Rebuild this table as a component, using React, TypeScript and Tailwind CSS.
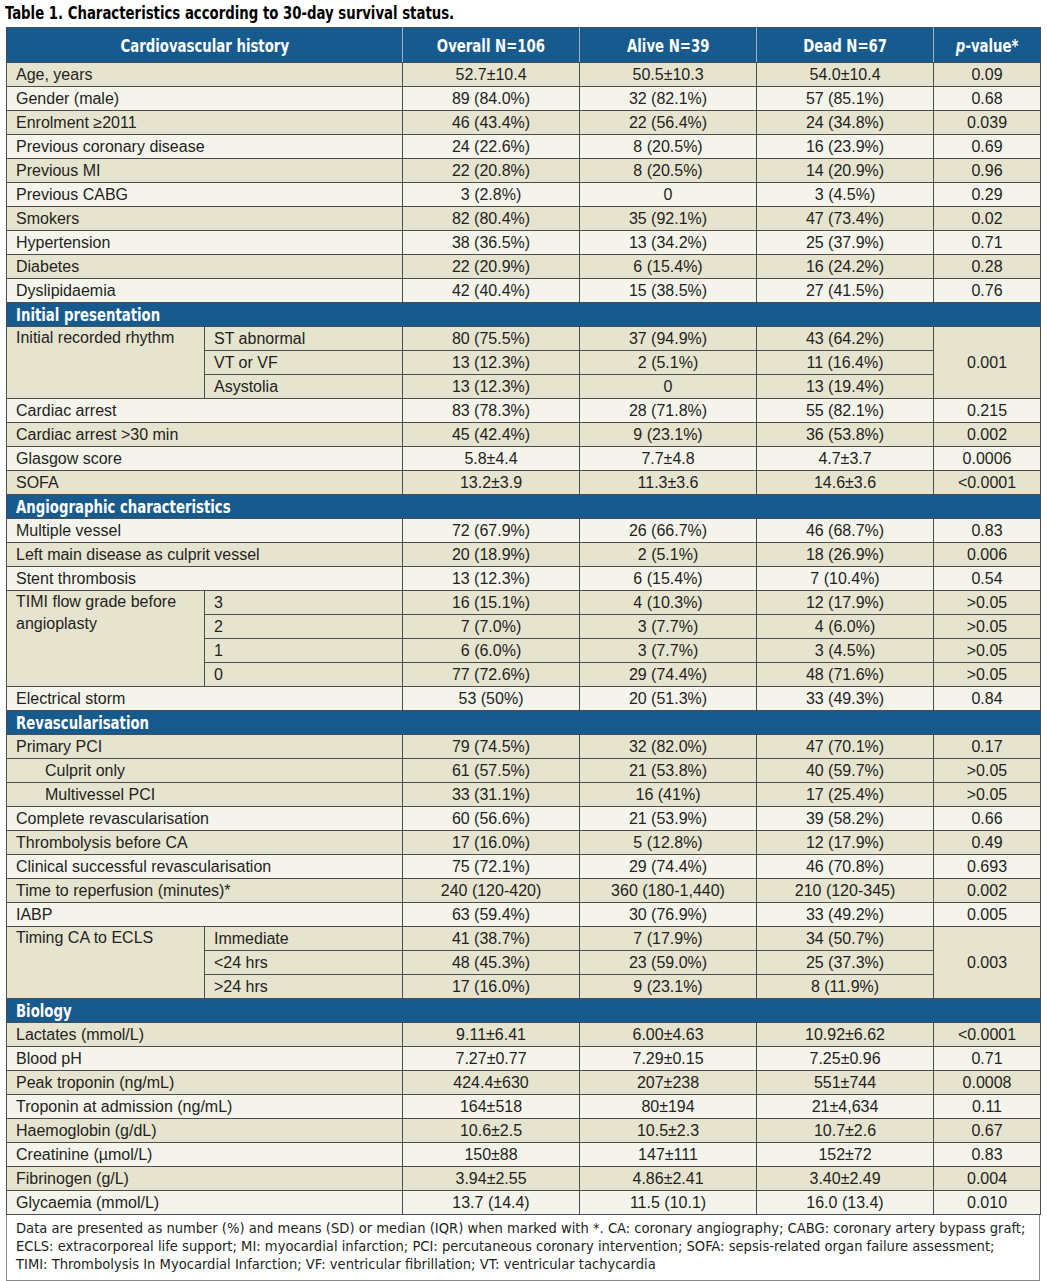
import React from 'react';

type Vals = [string, string, string, string];

type Row =
  | { kind: 'section'; title: string }
  | { kind: 'plain'; label: string; vals: Vals; dark: boolean; indent?: boolean }
  | {
      kind: 'group';
      label: string;
      dark: boolean;
      subs: { label: string; vals: [string, string, string]; p?: string }[];
      p?: string;
    };

const rows: Row[] = [
  { kind: 'plain', label: 'Age, years', vals: ['52.7±10.4', '50.5±10.3', '54.0±10.4', '0.09'], dark: true },
  { kind: 'plain', label: 'Gender (male)', vals: ['89 (84.0%)', '32 (82.1%)', '57 (85.1%)', '0.68'], dark: false },
  { kind: 'plain', label: 'Enrolment ≥2011', vals: ['46 (43.4%)', '22 (56.4%)', '24 (34.8%)', '0.039'], dark: true },
  { kind: 'plain', label: 'Previous coronary disease', vals: ['24 (22.6%)', '8 (20.5%)', '16 (23.9%)', '0.69'], dark: false },
  { kind: 'plain', label: 'Previous MI', vals: ['22 (20.8%)', '8 (20.5%)', '14 (20.9%)', '0.96'], dark: true },
  { kind: 'plain', label: 'Previous CABG', vals: ['3 (2.8%)', '0', '3 (4.5%)', '0.29'], dark: false },
  { kind: 'plain', label: 'Smokers', vals: ['82 (80.4%)', '35 (92.1%)', '47 (73.4%)', '0.02'], dark: true },
  { kind: 'plain', label: 'Hypertension', vals: ['38 (36.5%)', '13 (34.2%)', '25 (37.9%)', '0.71'], dark: false },
  { kind: 'plain', label: 'Diabetes', vals: ['22 (20.9%)', '6 (15.4%)', '16 (24.2%)', '0.28'], dark: true },
  { kind: 'plain', label: 'Dyslipidaemia', vals: ['42 (40.4%)', '15 (38.5%)', '27 (41.5%)', '0.76'], dark: false },

  { kind: 'section', title: 'Initial presentation' },
  {
    kind: 'group',
    label: 'Initial recorded rhythm',
    dark: true,
    p: '0.001',
    subs: [
      { label: 'ST abnormal', vals: ['80 (75.5%)', '37 (94.9%)', '43 (64.2%)'] },
      { label: 'VT or VF', vals: ['13 (12.3%)', '2 (5.1%)', '11 (16.4%)'] },
      { label: 'Asystolia', vals: ['13 (12.3%)', '0', '13 (19.4%)'] },
    ],
  },
  { kind: 'plain', label: 'Cardiac arrest', vals: ['83 (78.3%)', '28 (71.8%)', '55 (82.1%)', '0.215'], dark: false },
  { kind: 'plain', label: 'Cardiac arrest >30 min', vals: ['45 (42.4%)', '9 (23.1%)', '36 (53.8%)', '0.002'], dark: true },
  { kind: 'plain', label: 'Glasgow score', vals: ['5.8±4.4', '7.7±4.8', '4.7±3.7', '0.0006'], dark: false },
  { kind: 'plain', label: 'SOFA', vals: ['13.2±3.9', '11.3±3.6', '14.6±3.6', '<0.0001'], dark: true },

  { kind: 'section', title: 'Angiographic characteristics' },
  { kind: 'plain', label: 'Multiple vessel', vals: ['72 (67.9%)', '26 (66.7%)', '46 (68.7%)', '0.83'], dark: false },
  { kind: 'plain', label: 'Left main disease as culprit vessel', vals: ['20 (18.9%)', '2 (5.1%)', '18 (26.9%)', '0.006'], dark: true },
  { kind: 'plain', label: 'Stent thrombosis', vals: ['13 (12.3%)', '6 (15.4%)', '7 (10.4%)', '0.54'], dark: false },
  {
    kind: 'group',
    label: 'TIMI flow grade before angioplasty',
    dark: true,
    subs: [
      { label: '3', vals: ['16 (15.1%)', '4 (10.3%)', '12 (17.9%)'], p: '>0.05' },
      { label: '2', vals: ['7 (7.0%)', '3 (7.7%)', '4 (6.0%)'], p: '>0.05' },
      { label: '1', vals: ['6 (6.0%)', '3 (7.7%)', '3 (4.5%)'], p: '>0.05' },
      { label: '0', vals: ['77 (72.6%)', '29 (74.4%)', '48 (71.6%)'], p: '>0.05' },
    ],
  },
  { kind: 'plain', label: 'Electrical storm', vals: ['53 (50%)', '20 (51.3%)', '33 (49.3%)', '0.84'], dark: false },

  { kind: 'section', title: 'Revascularisation' },
  { kind: 'plain', label: 'Primary PCI', vals: ['79 (74.5%)', '32 (82.0%)', '47 (70.1%)', '0.17'], dark: true },
  { kind: 'plain', label: 'Culprit only', vals: ['61 (57.5%)', '21 (53.8%)', '40 (59.7%)', '>0.05'], dark: true, indent: true },
  { kind: 'plain', label: 'Multivessel PCI', vals: ['33 (31.1%)', '16 (41%)', '17 (25.4%)', '>0.05'], dark: true, indent: true },
  { kind: 'plain', label: 'Complete revascularisation', vals: ['60 (56.6%)', '21 (53.9%)', '39 (58.2%)', '0.66'], dark: false },
  { kind: 'plain', label: 'Thrombolysis before CA', vals: ['17 (16.0%)', '5 (12.8%)', '12 (17.9%)', '0.49'], dark: true },
  { kind: 'plain', label: 'Clinical successful revascularisation', vals: ['75 (72.1%)', '29 (74.4%)', '46 (70.8%)', '0.693'], dark: false },
  { kind: 'plain', label: 'Time to reperfusion (minutes)*', vals: ['240 (120-420)', '360 (180-1,440)', '210 (120-345)', '0.002'], dark: true },
  { kind: 'plain', label: 'IABP', vals: ['63 (59.4%)', '30 (76.9%)', '33 (49.2%)', '0.005'], dark: false },
  {
    kind: 'group',
    label: 'Timing CA to ECLS',
    dark: true,
    p: '0.003',
    subs: [
      { label: 'Immediate', vals: ['41 (38.7%)', '7 (17.9%)', '34 (50.7%)'] },
      { label: '<24 hrs', vals: ['48 (45.3%)', '23 (59.0%)', '25 (37.3%)'] },
      { label: '>24 hrs', vals: ['17 (16.0%)', '9 (23.1%)', '8 (11.9%)'] },
    ],
  },

  { kind: 'section', title: 'Biology' },
  { kind: 'plain', label: 'Lactates (mmol/L)', vals: ['9.11±6.41', '6.00±4.63', '10.92±6.62', '<0.0001'], dark: true },
  { kind: 'plain', label: 'Blood pH', vals: ['7.27±0.77', '7.29±0.15', '7.25±0.96', '0.71'], dark: false },
  { kind: 'plain', label: 'Peak troponin (ng/mL)', vals: ['424.4±630', '207±238', '551±744', '0.0008'], dark: true },
  { kind: 'plain', label: 'Troponin at admission (ng/mL)', vals: ['164±518', '80±194', '21±4,634', '0.11'], dark: false },
  { kind: 'plain', label: 'Haemoglobin (g/dL)', vals: ['10.6±2.5', '10.5±2.3', '10.7±2.6', '0.67'], dark: true },
  { kind: 'plain', label: 'Creatinine (µmol/L)', vals: ['150±88', '147±111', '152±72', '0.83'], dark: false },
  { kind: 'plain', label: 'Fibrinogen (g/L)', vals: ['3.94±2.55', '4.86±2.41', '3.40±2.49', '0.004'], dark: true },
  { kind: 'plain', label: 'Glycaemia (mmol/L)', vals: ['13.7 (14.4)', '11.5 (10.1)', '16.0 (13.4)', '0.010'], dark: false },
];

// condensed bold headings: DejaVu Condensed squeezed a little further
const narrow = "font-['Liberation_Sans_Narrow','DejaVu_Sans_Condensed','Liberation_Sans',sans-serif]";
const cell = 'h-[24px] border border-[#4d4d4d] p-0 text-center align-middle leading-[22px]';
const labelCell = 'h-[24px] border border-[#4d4d4d] py-0 pl-[9px] pr-1 text-left align-middle leading-[22px]';
const headCell = 'h-[35px] border border-[#4d4d4d] border-r-[#9fb3c6] p-0 text-center align-middle';

const bgOf = (dark: boolean) => (dark ? 'bg-[#e6e3cf]' : 'bg-[#f4f4ec]');

const Squeeze = ({ children, left }: { children: React.ReactNode; left?: boolean }) => (
  <span className={`inline-block whitespace-nowrap scale-x-[0.82] ${left ? 'origin-left' : 'origin-center'}`}>{children}</span>
);

const renderRow = (row: Row, i: number) => {
  if (row.kind === 'section') {
    return (
      <tr key={i} className="bg-[#175a8e]">
        <td
          colSpan={6}
          className={`h-[24px] border border-[#4d4d4d] py-0 pl-[9px] text-left align-middle text-[18px] font-bold leading-[22px] text-white ${narrow}`}
        >
          <Squeeze left>{row.title}</Squeeze>
        </td>
      </tr>
    );
  }
  if (row.kind === 'plain') {
    return (
      <tr key={i} className={bgOf(row.dark)}>
        <td colSpan={2} className={`${labelCell} ${row.indent ? 'pl-[38px]' : ''}`}>
          {row.label}
        </td>
        {row.vals.map((v, j) => (
          <td key={j} className={cell}>
            {v}
          </td>
        ))}
      </tr>
    );
  }
  return row.subs.map((s, k) => (
    <tr key={`${i}-${k}`} className={bgOf(row.dark)}>
      {k === 0 && (
        <td rowSpan={row.subs.length} className={`${labelCell} align-top`}>
          {row.label}
        </td>
      )}
      <td className={labelCell}>{s.label}</td>
      {s.vals.map((v, j) => (
        <td key={j} className={cell}>
          {v}
        </td>
      ))}
      {row.p ? (
        k === 0 && (
          <td rowSpan={row.subs.length} className={cell}>
            {row.p}
          </td>
        )
      ) : (
        <td className={cell}>{s.p}</td>
      )}
    </tr>
  ));
};

export default function App() {
  return (
    <div className="min-h-[1281px] w-[1047px] bg-white font-['Liberation_Sans',Arial,sans-serif] text-[16px] text-[#231f20]">
      <div className="px-[5px] pt-[1px]">
        <h1 className={`text-[18px] font-bold leading-[24px] text-black ${narrow}`}>
          <Squeeze left>Table 1. Characteristics according to 30-day survival status.</Squeeze>
        </h1>
      </div>
      <div className="ml-[6px] mt-[2px] w-[1034px]">
        <table className="w-[1034px] table-fixed border-collapse border border-[#4d4d4d]">
          <colgroup>
            <col className="w-[198px]" />
            <col className="w-[198px]" />
            <col className="w-[177px]" />
            <col className="w-[177px]" />
            <col className="w-[177px]" />
            <col className="w-[107px]" />
          </colgroup>
          <thead>
            <tr className={`bg-[#175a8e] text-[18px] font-bold text-white ${narrow}`}>
              <th colSpan={2} className={headCell}>
                <Squeeze>Cardiovascular history</Squeeze>
              </th>
              <th className={headCell}>
                <Squeeze>Overall N=106</Squeeze>
              </th>
              <th className={headCell}>
                <Squeeze>Alive N=39</Squeeze>
              </th>
              <th className={headCell}>
                <Squeeze>Dead N=67</Squeeze>
              </th>
              <th className="h-[35px] border border-[#4d4d4d] p-0 text-center align-middle">
                <Squeeze>
                  <span className="italic">p</span>-value*
                </Squeeze>
              </th>
            </tr>
          </thead>
          <tbody>{rows.flatMap((r, i) => renderRow(r, i))}</tbody>
        </table>
        <div
          className={`whitespace-nowrap border border-t-0 border-[#8a8a8a] bg-white pb-[7px] pl-[9px] pr-2 pt-[4px] text-[14.6px] leading-[18px] text-[#231f20] ${narrow}`}
        >
          Data are presented as number (%) and means (SD) or median (IQR) when marked with *. CA: coronary angiography; CABG:
          coronary artery bypass graft;
          <br />
          ECLS: extracorporeal life support; MI: myocardial infarction; PCI: percutaneous coronary intervention; SOFA:
          sepsis-related organ failure assessment;
          <br />
          TIMI: Thrombolysis In Myocardial Infarction; VF: ventricular fibrillation; VT: ventricular tachycardia
        </div>
      </div>
    </div>
  );
}
